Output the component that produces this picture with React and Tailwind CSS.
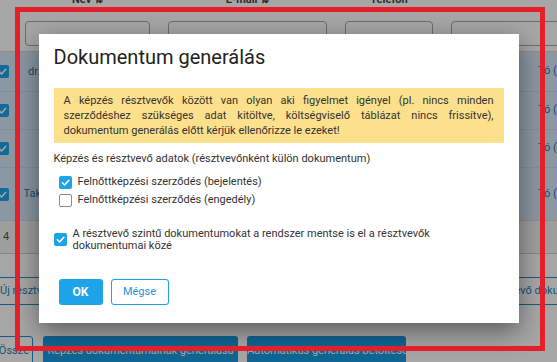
import React from "react";

function Check({ checked, className = "" }) {
  return checked ? (
    <span className={"flex h-[13px] w-[13px] shrink-0 items-center justify-center rounded-[2px] bg-[#1fa3e6] " + className}>
      <svg width="11" height="11" viewBox="0 0 11 11">
        <polyline points="2.4,5.8 4.6,8 8.8,3.2" fill="none" stroke="white" strokeWidth="1.5" strokeLinecap="round" strokeLinejoin="round" />
      </svg>
    </span>
  ) : (
    <span className={"h-[13px] w-[13px] shrink-0 rounded-[2px] border border-[#8a8a8a] bg-white " + className}></span>
  );
}

function RowCheck() {
  return (
    <span className="flex h-[13px] w-[13px] shrink-0 items-center justify-center rounded-[2px] bg-[#1fa3e6]">
      <svg width="11" height="11" viewBox="0 0 11 11">
        <polyline points="2.4,5.8 4.6,8 8.8,3.2" fill="none" stroke="white" strokeWidth="1.5" strokeLinecap="round" strokeLinejoin="round" />
      </svg>
    </span>
  );
}

const rows = [
  { h: "h-[40px]", name: "dr. Horváth Ildikó Anna", email: "horvath.ildiko@mail.hu", tel: "+36 30 123 4567" },
  { h: "h-[38px]", name: "Kiss Péter", email: "kiss.peter@mail.hu", tel: "+36 20 765 4321" },
  { h: "h-[38px]", name: "Szabó Éva", email: "szabo.eva@mail.hu", tel: "+36 70 222 3344" },
  { h: "h-[53px]", name: "Takácsné Nagy Erzsébet", email: "takacsne.nagy.erzsebet@mail.hu", tel: "+36 30 555 6677" },
];

export default function App() {
  return (
    <div className="relative h-[362px] w-[557px] overflow-hidden bg-white font-['Roboto','Liberation_Sans',sans-serif]">
      {/* underlying page */}
      <div className="-mt-[6px] text-[11px] text-[#333]">
        {/* header */}
        <div className="flex h-[12px] font-bold leading-[12px] text-[#444]">
          <div className="w-[16px] shrink-0"></div>
          <div className="w-[143px] shrink-0 text-center">Név ⇅</div>
          <div className="w-[177px] shrink-0 text-center">E-mail ⇅</div>
          <div className="w-[106px] shrink-0 text-center">Telefon</div>
          <div className="flex-1"></div>
        </div>
        {/* filter row */}
        <div className="flex h-[46px] border-b border-[#d8d8d8] pt-[15px]">
          <div className="w-[16px] shrink-0"></div>
          <div className="w-[143px] shrink-0 px-[9px]"><div className="h-[25px] rounded-[4px] border border-[#a8a8a8]"></div></div>
          <div className="w-[177px] shrink-0 px-[9px]"><div className="h-[25px] rounded-[4px] border border-[#a8a8a8]"></div></div>
          <div className="w-[106px] shrink-0 px-[9px]"><div className="h-[25px] rounded-[4px] border border-[#a8a8a8]"></div></div>
          <div className="flex-1 pl-[9px]"><div className="h-[25px] w-[140px] rounded-[4px] border border-[#a8a8a8]"></div></div>
        </div>
        {/* rows */}
        {rows.map((r, i) => (
          <div key={i} className={"flex items-center border-b border-[#c9dbe8] bg-[#d6e9f8] " + r.h}>
            <div className="flex w-[16px] shrink-0 justify-start -ml-[4px]"><RowCheck /></div>
            <div className="w-[143px] shrink-0 px-[10px] text-center leading-[14px] text-[#2c74b8]">{r.name}</div>
            <div className="w-[177px] shrink-0 px-[9px] text-center text-[#2c74b8]">{r.email}</div>
            <div className="w-[106px] shrink-0 px-[9px] text-center">{r.tel}</div>
            <div className="w-[96px] shrink-0"></div>
            <div className="flex-1 whitespace-nowrap pl-[4px] text-[#2c74b8]">Tó (2)</div>
          </div>
        ))}
        {/* footer */}
        <div className="flex h-[33px] items-center border-b border-[#d0d0d0] bg-[#f3f3f3] pl-[3px] text-[#555]">4</div>
        <div className="h-[23px]"></div>
        {/* button row */}
        <div className="flex h-[28px] whitespace-nowrap">
          <div className="w-[473px] shrink-0">
            <button className="-ml-[9px] h-[28px] rounded-[3px] border border-[#1f8fd0] px-[8px] text-[11px] text-[#1f7fc0]">Új résztvevő hozzáadása</button>
          </div>
          <button className="h-[28px] shrink-0 rounded-[3px] border border-[#1f8fd0] px-[8px] text-[11px] text-[#1f7fc0]">Résztvevő dokumentumai</button>
        </div>
        <div className="h-[31px]"></div>
        {/* bottom buttons */}
        <div className="flex h-[30px] items-start whitespace-nowrap">
          <button className="-ml-[22px] h-[30px] w-[55px] shrink-0 rounded-[3px] border border-[#1f8fd0] pr-[3px] text-right text-[11px] text-[#1f7fc0]">Össze</button>
          <button className="ml-[10px] h-[30px] w-[195px] shrink-0 rounded-[3px] bg-[#1a9be0] text-[11px] text-white">Képzés dokumentumainak generálása</button>
          <button className="ml-[9px] h-[30px] w-[159px] shrink-0 rounded-[3px] bg-[#1a9be0] text-[11px] text-white">Automatikus generálás betöltése</button>
        </div>
      </div>

      {/* overlay */}
      <div className="absolute inset-0 bg-black/35"></div>

      {/* modal */}
      <div className="absolute inset-0 flex items-start justify-center pt-[34px]">
        <div className="h-[289px] w-[480px] bg-white px-[15px] shadow-[0_8px_24px_rgba(0,0,0,0.45)]">
          <div className="pt-[11px] text-[20px] leading-[24px] text-[#222]">Dokumentum generálás</div>
          <div className="mt-[19px] bg-[#fde08c] px-[10px] py-[5px] text-justify text-[11px] leading-[15px] text-[#333]">
            A képzés résztvevők között van olyan aki figyelmet igényel (pl. nincs minden szerződéshez szükséges adat kitöltve, költségviselő táblázat nincs frissítve), dokumentum generálás előtt kérjük ellenőrizze le ezeket!
          </div>
          <div className="mt-[9px] text-[11px] leading-[14px] text-[#333]">Képzés és résztvevő adatok (résztvevőnként külön dokumentum)</div>
          <div className="mt-[9px] flex flex-col gap-[3px] pl-[5px] text-[11px] text-[#333]">
            <label className="flex h-[15px] items-center gap-[6px]"><Check checked /> Felnőttképzési szerződés (bejelentés)</label>
            <label className="flex h-[15px] items-center gap-[6px]"><Check checked={false} /> Felnőttképzési szerződés (engedély)</label>
          </div>
          <label className="mt-[20px] flex items-center gap-[6px] text-[11px] leading-[11.5px] text-[#333]">
            <Check checked />
            <span className="w-[380px]">A résztvevő szintű dokumentumokat a rendszer mentse is el a résztvevők dokumentumai közé</span>
          </label>
          <div className="mt-[28px] flex gap-[8px] pl-[5px]">
            <button className="h-[26px] w-[44px] rounded-[3px] bg-[#1ca3e8] text-[12px] font-bold text-white">OK</button>
            <button className="h-[26px] w-[58px] rounded-[3px] border border-[#1ca3e8] bg-white text-[11px] text-[#2a93d8]">Mégse</button>
          </div>
        </div>
      </div>

      {/* red annotation frame */}
      <div className="pointer-events-none absolute left-[15px] top-[7px] h-[344px] w-[530px] border-[5px] border-[#e51f2a]"></div>
    </div>
  );
}
